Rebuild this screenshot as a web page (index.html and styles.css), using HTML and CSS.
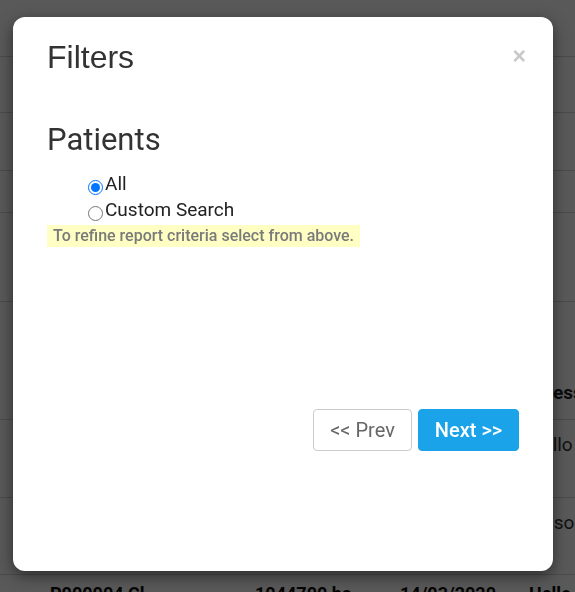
FILE: index.html
```html
<!DOCTYPE html>
<html>
<head>
<meta charset="utf-8">
<link rel="stylesheet" href="styles.css">
</head>
<body>
<div class="page">
  <div class="row r1"></div>
  <div class="row r2"></div>
  <div class="row r3"></div>
  <div class="row r4"></div>
  <div class="row r5"></div>
  <div class="row r6 head"><span class="cell c4h">Address</span></div>
  <div class="row r7"><span class="cell c4">Hello</span></div>
  <div class="row r8"><span class="cell c4j">Jason</span></div>
  <div class="row r9"><span class="cell c1">P000004 Cl</span><span class="cell c2">1044700 ba</span><span class="cell c3">14/03/2020</span><span class="cell c4">Hello</span></div>
</div>
<div class="overlay"></div>
<div class="modal">
  <div class="modal-header">
    <h2 class="modal-title">Filters</h2>
    <span class="close">&times;</span>
  </div>
  <div class="modal-body">
    <h3 class="section-title">Patients</h3>
    <div class="options">
      <label class="option"><input type="radio" name="p" checked>All</label>
      <label class="option"><input type="radio" name="p">Custom Search</label>
    </div>
    <div class="hint">To refine report criteria select from above.</div>
  </div>
  <div class="modal-footer">
    <button class="btn btn-prev">&lt;&lt; Prev</button>
    <button class="btn btn-next">Next &gt;&gt;</button>
  </div>
</div>
</body>
</html>
```
FILE: styles.css
```css
html, body {
  margin: 0;
  padding: 0;
  height: 100%;
  overflow: hidden;
}
body {
  background: #fff;
  font-family: Roboto, "Liberation Sans", sans-serif;
  color: #333;
}
.page {
  display: flex;
  flex-direction: column;
}
.row {
  display: flex;
  border-bottom: 1px solid #d8d8d8;
  position: relative;
  flex: none;
  font-size: 19px;
  line-height: 22px;
  color: #333;
}
.r1 { height: 56px; }
.r2 { height: 55px; }
.r3 { height: 57px; }
.r4 { height: 41px; }
.r5 { height: 88px; }
.r6 { height: 117px; }
.r7 { height: 77px; }
.r8 { height: 76px; }
.r9 { height: 40px; }
.cell { position: absolute; top: 14px; }
.head .cell { top: auto; bottom: 15px; font-weight: bold; color: #222; }
.r9 .cell { top: 8px; font-size: 18px; font-weight: bold; color: #111; }
.c1 { left: 50px; }
.c2 { left: 255px; }
.c3 { left: 400px; }
.c4 { left: 529px; }
.c4h { left: 512px; }
.c4j { left: 533px; }
.overlay {
  position: fixed;
  inset: 0;
  background: rgba(0,0,0,0.65);
}
.modal {
  position: absolute;
  left: 13px;
  top: 17px;
  width: 540px;
  height: 554px;
  background: #fff;
  border-radius: 12px;
  box-shadow: 0 5px 15px rgba(0,0,0,0.5);
  box-sizing: border-box;
  display: flex;
  flex-direction: column;
}
.modal-header {
  display: flex;
  justify-content: space-between;
  align-items: flex-start;
  padding: 22px 27px 0 34px;
}
.modal-title {
  margin: 0;
  font-family: "Liberation Sans", Arial, sans-serif;
  font-weight: normal;
  font-size: 32px;
  line-height: 36px;
  color: #333;
}
.close {
  font-family: "Liberation Sans", Arial, sans-serif;
  font-size: 23px;
  font-weight: bold;
  color: #c8c8c8;
  line-height: 26px;
  margin-top: 4px;
}
.modal-body {
  padding: 47px 34px 0 34px;
  flex: 1;
}
.section-title {
  margin: 0;
  font-family: Roboto, sans-serif;
  font-weight: normal;
  font-size: 31px;
  line-height: 36px;
  color: #333;
}
.options {
  display: flex;
  flex-direction: column;
  padding-left: 40px;
  margin-top: 13px;
}
.option {
  font-family: Roboto, sans-serif;
  font-size: 19px;
  line-height: 26px;
  color: #222;
  display: flex;
  align-items: center;
}
.option input {
  margin: 6px 2px 0 1px;
  width: 15px;
  height: 15px;
}
.hint {
  display: inline-block;
  margin-top: 2px;
  background: #ffffc4;
  color: #7a7a7a;
  font-family: Roboto, sans-serif;
  font-size: 16px;
  font-weight: 500;
  line-height: 22px;
  padding: 0 6px;
}
.modal-footer {
  display: flex;
  justify-content: flex-end;
  gap: 6px;
  padding: 0 34px 120px 0;
}
.btn {
  font-family: Roboto, sans-serif;
  font-size: 20px;
  height: 42px;
  border-radius: 4px;
  padding: 0 14px;
  cursor: pointer;
}
.btn-prev {
  width: 99px;
  background: #fff;
  border: 1px solid #ccc;
  color: #666;
}
.btn-next {
  width: 101px;
  background: #1aa3e8;
  border: 1px solid #1aa3e8;
  color: #fff;
  font-weight: 500;
}
```
